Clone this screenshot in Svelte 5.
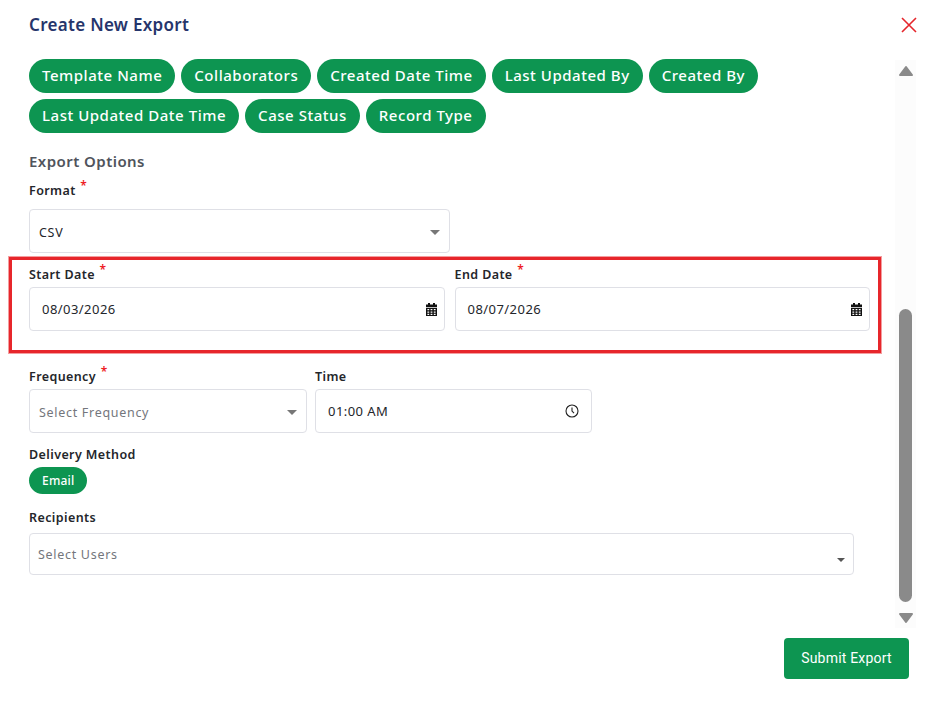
<script>
	const columns = [
		'Template Name',
		'Collaborators',
		'Created Date Time',
		'Last Updated By',
		'Created By',
		'Last Updated Date Time',
		'Case Status',
		'Record Type'
	];
</script>

{#snippet calendar()}
	<svg class="icon" width="11" height="13" viewBox="0 0 11 13" aria-hidden="true">
		<path fill="#111" fill-rule="evenodd" d="M2 0h2v1.5h3V0h2v1.5h2V4H0V1.5h2zM0 4.7h11V13H0zM1.4 6v1.3h1.8V6zm3.2 0v1.3h1.8V6zm3.2 0v1.3h1.8V6zM1.4 8.4v1.3h1.8V8.4zm3.2 0v1.3h1.8V8.4zm3.2 0v1.3h1.8V8.4zM1.4 10.7V12h1.8v-1.3zm3.2 0V12h1.8v-1.3zm3.2 0V12h1.8v-1.3z" />
	</svg>
{/snippet}

{#snippet caret()}
	<svg class="caret" width="10" height="5" viewBox="0 0 10 5" aria-hidden="true">
		<path fill="#777" d="M0 0h10L5 5z" />
	</svg>
{/snippet}

<div class="modal">
	<header class="header">
		<h2>Create New Export</h2>
		<button class="close" aria-label="Close">
			<svg width="16" height="16" viewBox="0 0 16 16">
				<path d="M1 1l14 14M15 1L1 15" stroke="#e5262c" stroke-width="1.6" fill="none" />
			</svg>
		</button>
	</header>

	<div class="body">
		<div class="content">
			<div class="pills">
				{#each columns as column}
					<span class="pill">{column}</span>
				{/each}
			</div>

			<h3>Export Options</h3>

			<label class="label format-label">Format <sup>*</sup></label>
			<div class="field format">
				<span class="value small">CSV</span>
				{@render caret()}
			</div>

			<div class="highlight">
				<div class="dates">
					<div class="col">
						<label class="label">Start Date <sup>*</sup></label>
						<div class="field date">
							<span class="value">08/03/2026</span>
							{@render calendar()}
						</div>
					</div>
					<div class="col">
						<label class="label">End Date <sup>*</sup></label>
						<div class="field date">
							<span class="value">08/07/2026</span>
							{@render calendar()}
						</div>
					</div>
				</div>
			</div>

			<div class="schedule">
				<div class="col freq">
					<label class="label">Frequency <sup>*</sup></label>
					<div class="field format">
						<span class="placeholder">Select Frequency</span>
						{@render caret()}
					</div>
				</div>
				<div class="col time">
					<label class="label">Time</label>
					<div class="field date">
						<span class="value">01:00 AM</span>
						<svg class="icon" width="14" height="14" viewBox="0 0 14 14" aria-hidden="true">
							<circle cx="7" cy="7" r="6" fill="none" stroke="#222" stroke-width="1.1" />
							<path d="M7 3.4V7l2 2.2" fill="none" stroke="#222" stroke-width="1.1" />
						</svg>
					</div>
				</div>
			</div>

			<label class="label delivery-label">Delivery Method</label>
			<span class="pill small-pill">Email</span>

			<label class="label recipients-label">Recipients</label>
			<div class="field recipients">
				<span class="placeholder">Select Users</span>
				<svg class="users-caret" width="8" height="4" viewBox="0 0 8 4" aria-hidden="true">
					<path fill="#555" d="M0 0h8L4 4z" />
				</svg>
			</div>
		</div>

		<div class="scrollbar">
			<svg width="16" height="12" viewBox="0 0 16 12" aria-hidden="true">
				<path fill="#8a8a8a" stroke="#8a8a8a" stroke-width="2" stroke-linejoin="round" d="M8 2l6 8H2z" />
			</svg>
			<div class="track"><div class="thumb"></div></div>
			<svg width="16" height="12" viewBox="0 0 16 12" aria-hidden="true">
				<path fill="#8a8a8a" stroke="#8a8a8a" stroke-width="2" stroke-linejoin="round" d="M2 2h12l-6 8z" />
			</svg>
		</div>
	</div>

	<footer class="footer">
		<button class="submit">Submit Export</button>
	</footer>
</div>

<style>
	:global(body) {
		margin: 0;
		background: #fff;
	}

	.modal {
		width: 935px;
		height: 702px;
		box-sizing: border-box;
		font-family: 'Noto Sans', 'Open Sans', sans-serif;
		color: #24262b;
		overflow: hidden;
	}

	.header {
		display: flex;
		align-items: center;
		justify-content: space-between;
		height: 50px;
		padding: 0 18px 0 29px;
		box-sizing: border-box;
	}

	h2 {
		margin: 0 0 2px;
		font-size: 17px;
		font-weight: 600;
		letter-spacing: 0.3px;
		color: #26356b;
	}

	.close {
		display: flex;
		padding: 0;
		border: 0;
		background: none;
	}

	.body {
		display: flex;
		height: 578px;
	}

	.content {
		width: 895px;
		box-sizing: border-box;
		padding: 9px 0 0 29px;
	}

	.pills {
		display: flex;
		flex-wrap: wrap;
		gap: 6px;
		width: 760px;
	}

	.pill {
		display: inline-flex;
		align-items: center;
		box-sizing: border-box;
		height: 34px;
		padding: 0 13px 2px;
		border-radius: 17px;
		background: #0d9551;
		color: #fff;
		font-size: 15px;
		font-weight: 500;
		letter-spacing: 0.53px;
		white-space: nowrap;
	}

	h3 {
		margin: 18px 0 0;
		height: 20px;
		line-height: 20px;
		font-size: 15px;
		font-weight: 600;
		letter-spacing: 0.45px;
		color: #50545c;
	}

	.label {
		display: block;
		height: 16px;
		line-height: 16px;
		font-size: 12.5px;
		font-weight: 600;
		letter-spacing: 0.4px;
	}

	sup {
		color: #ee1c25;
		font-size: 12px;
		line-height: 0;
		margin-left: 1px;
	}

	.format-label {
		margin-top: 12px;
	}

	.field {
		display: flex;
		align-items: center;
		justify-content: space-between;
		box-sizing: border-box;
		height: 44px;
		border: 1px solid #dfe0e6;
		border-radius: 4px;
		background: #fff;
	}

	.format {
		padding: 2px 9px 0;
	}

	.content > .format {
		width: 421px;
		margin-top: 10px;
	}

	.value {
		font-size: 13px;
		letter-spacing: 0.45px;
		color: #24262b;
	}

	.small {
		font-size: 12.5px;
		letter-spacing: 0.7px;
	}

	.placeholder {
		font-size: 12.5px;
		letter-spacing: 0.7px;
		color: #74767c;
	}

	.highlight {
		box-sizing: border-box;
		width: 872px;
		height: 96px;
		margin: 4px 0 0 -20px;
		padding: 7px 8px 0 17px;
		border: 3px solid #e7262b;
		box-shadow: 0 0 0 1px rgba(231, 38, 43, 0.45);
	}

	.dates {
		display: flex;
		gap: 10px;
	}

	.dates .col {
		flex: 1;
	}

	.col .label {
		margin-bottom: 4px;
	}

	.date {
		padding: 0 7px 0 12px;
	}

	.schedule {
		display: flex;
		gap: 8px;
		margin-top: 16px;
	}

	.freq {
		width: 278px;
	}

	.time {
		width: 277px;
	}

	.time .date {
		padding-right: 12px;
	}

	.delivery-label {
		margin-top: 14px;
	}

	.small-pill {
		height: 27px;
		margin-top: 4px;
		padding: 0 13px 1px;
		font-size: 12px;
		font-weight: 500;
		letter-spacing: 0.2px;
		vertical-align: top;
	}

	.recipients-label {
		margin-top: 16px;
	}

	.recipients {
		position: relative;
		width: 825px;
		height: 42px;
		margin-top: 7px;
		padding: 0 8px;
	}

	.users-caret {
		position: absolute;
		right: 8px;
		bottom: 12px;
	}

	.scrollbar {
		display: flex;
		flex-direction: column;
		align-items: center;
		width: 21px;
		height: 568px;
		margin-top: 10px;
		padding: 5px 0 4px;
		box-sizing: border-box;
		background: #fcfcfc;
	}

	.track {
		flex: 1;
		display: flex;
		flex-direction: column;
		justify-content: flex-end;
		width: 13px;
		padding-bottom: 10px;
	}

	.thumb {
		height: 293px;
		background: #8a8a8a;
		border-radius: 7px;
	}

	.footer {
		display: flex;
		justify-content: flex-end;
		padding: 10px 26px 0 0;
	}

	.submit {
		width: 125px;
		height: 41px;
		padding: 0 0 1px;
		border: 0;
		border-radius: 4px;
		background: #0d9551;
		color: #fff;
		font-family: Roboto, sans-serif;
		font-size: 14px;
		font-weight: 400;
		letter-spacing: 0.2px;
	}
</style>
